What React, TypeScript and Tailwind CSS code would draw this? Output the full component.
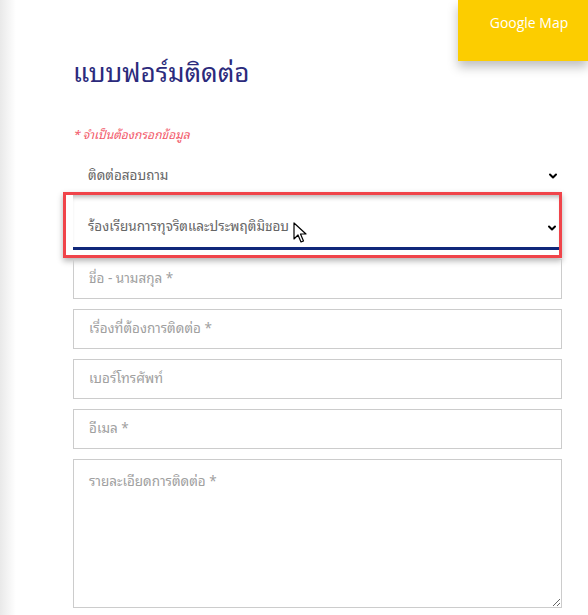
import { ChevronDown } from 'lucide-react';

const thai = "font-['Tahoma','Noto_Sans_Thai_Looped','Noto_Sans_Thai','Noto_Sans',sans-serif]";

const fields = ['ชื่อ - นามสกุล *', 'เรื่องที่ต้องการติดต่อ *', 'เบอร์โทรศัพท์', 'อีเมล *'];

const Cursor = () => (
    <svg width="14" height="22" viewBox="0 0 14 22" className="absolute left-[293px] top-[222px]">
        <path d="M1 1 L1 17 L5 13 L8 20 L10.5 19 L7.5 12 L13 12 Z" fill="white" stroke="black" strokeWidth="1.2" strokeLinejoin="round" />
    </svg>
);

const App = () => {
    return (
        <div className={`relative flex min-h-[615px] w-[588px] overflow-hidden bg-white ${thai}`}>
            {/* left page shadow */}
            <div className="w-[16px] shrink-0 bg-gradient-to-r from-[#e9e9e9] to-white" />

            {/* floating map button */}
            <div className="absolute right-0 top-0 flex h-[61px] w-[130px] justify-center bg-[#fccd00] pl-[12px] pt-[13px] shadow-[0_6px_10px_rgba(0,0,0,0.25)]">
                <span className="font-['Open_Sans',sans-serif] text-[14px] leading-[20px] text-white">Google Map</span>
            </div>

            <div className="ml-[57px] w-[489px] pt-[50px]">
                <h1 className="text-[26px] leading-[40px] text-[#2b2a7c]">แบบฟอร์มติดต่อ</h1>

                <p className="mt-[35px] text-[12px] italic leading-[18px] text-[#f25a6a]">* จำเป็นต้องกรอกข้อมูล</p>

                {/* select: type */}
                <div className="mt-[12px] flex h-[37px] items-start justify-between pl-[15px] pr-[3px] pt-[9px]">
                    <span className="text-[13.5px] leading-[20px] text-[#666]">ติดต่อสอบถาม</span>
                    <ChevronDown size={12} strokeWidth={4} className="mt-[6px] text-black" />
                </div>

                {/* highlighted select */}
                <div className="-ml-[10px] w-[499px] border-[3px] border-[#f0444a] pb-[5px] pl-[7px] shadow-[0_3px_6px_rgba(0,0,0,0.3)]">
                    <div className="flex h-[55px] items-start justify-between border-b-[3px] border-[#10287a] pl-[15px] pr-[1px] pt-[20px] shadow-[inset_0_5px_5px_-3px_rgba(0,0,0,0.3)]">
                        <span className="text-[13.5px] leading-[20px] text-[#666]">ร้องเรียนการทุจริตและประพฤติมิชอบ</span>
                        <ChevronDown size={12} strokeWidth={4} className="mt-[7px] text-black" />
                    </div>
                </div>

                <div className="mt-[1px] flex flex-col gap-[10px]">
                    {fields.map((f) => (
                        <input
                            key={f}
                            placeholder={f}
                            className="h-[40px] w-full border border-[#cccccc] px-[15px] pb-[4px] text-[13.5px] text-[#555] outline-none placeholder:text-[#a0a0a0]"
                        />
                    ))}
                    <textarea
                        placeholder="รายละเอียดการติดต่อ *"
                        className="h-[149px] w-full border border-[#cccccc] px-[15px] pt-[10px] text-[13.5px] leading-[20px] text-[#555] outline-none placeholder:text-[#a0a0a0]"
                    />
                </div>
            </div>

            <Cursor />
        </div>
    );
};

export default App;
